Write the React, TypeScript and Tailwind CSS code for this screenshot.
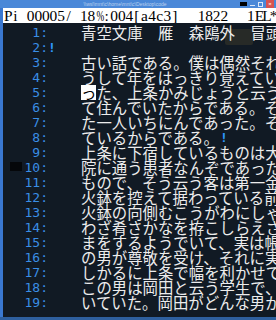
const ROWS = [
    '青空文庫　雁　森鴎外　冒頭',
    '',
    '古い話である。僕は偶然それ',
    'うして年をはっきり覚えてい',
    'った、上条かみじょうと云う',
    'て住んでいたからである。そ',
    'た一人いちにんであった。そ',
    'ているからである。',
    '上条に下宿しているものは大',
    '院に通う患者なんぞであった',
    'もので、そう云う客は第一金',
    '火鉢を控えて据わっている前',
    '火鉢の向側むこうがわにしゃ',
    'わざ肴さかなを拵こしらえさ',
    'まをするようでいて、実は帳',
    'の男が尊敬を受け、それに実',
    'しかるに上条で幅を利かせて',
    'この男は岡田と云う学生で、',
    'いていた。岡田がどんな男か',
];

// half-width cells so the serif status text sits on a fixed grid
function Cells({ text }: { text: string }) {
    return (
        <>
            {text.split('').map((c, i) => (
                <span
                    key={i}
                    className={c === '%' ? 'inline-block w-[7.6px] text-center scale-x-[0.6]' : 'inline-block w-[7.6px] text-center'}
                >
                    {c === ' ' ? '\u00a0' : c}
                </span>
            ))}
        </>
    );
}

export default function App() {
    return (
        <div className="w-[276px] h-[320px] overflow-hidden flex flex-col bg-[#111a24]">
            {/* Title bar */}
            <div className="h-[8px] shrink-0 bg-[#4a88d8] flex items-center">
                <span className="flex-1 text-center pl-[10px] text-[5px] leading-[8px] text-white/60 font-['Liberation_Sans',sans-serif] whitespace-nowrap">
                    \\wsl\mnt\c\home\mnt\c\Desktop\code
                </span>
                <div className="flex items-center h-full gap-[3px] pr-[2px]">
                    <div className="w-[7px] h-[4px] bg-black" />
                    <div className="w-[5px] h-[1px] bg-white/80 mt-[3px]" />
                    <div className="w-[5px] h-[5px] border border-white/80" />
                    <div className="w-[8px] h-[8px] bg-[#d9534f] flex items-center justify-center text-white text-[6px] leading-none">×</div>
                </div>
            </div>

            <div className="flex flex-1 min-h-0">
                {/* left window frame */}
                <div className="w-[3px] shrink-0 bg-[#3a78d0]" />

                <div className="flex-1 min-w-0 flex flex-col">
                    {/* Status bar */}
                    <div className="h-[15px] shrink-0 bg-white text-black text-[15.4px] leading-[15px] pl-[1px] whitespace-nowrap overflow-hidden flex font-['Liberation_Serif',serif]">
                        <span className="shrink-0"><Cells text="Pi 00005/ 18%:004[a4c3]" /></span>
                        <span className="shrink-0 ml-[19px]"><Cells text="1822" /></span>
                        <span className="shrink-0 ml-[19px]"><Cells text="1EL*" /></span>
                    </div>

                    {/* Text area, desktop faintly showing through */}
                    <div className="flex-1 pt-[2px] overflow-hidden relative">
                        <div className="absolute left-[222px] top-[6px] w-[28px] h-[16px] rounded-[2px] bg-[#6b5a2e]/25" />
                        <div className="absolute left-[7px] top-[139px] w-[12px] h-[9px] bg-black/70" />
                        <div className="relative">
                            {ROWS.map((row, i) => (
                                <div key={i} className="flex h-[15px] whitespace-nowrap">
                                    <span className="w-[45px] shrink-0 text-right text-[13px] leading-[15px] text-[#3a8ee6] font-['DejaVu_Sans_Mono',monospace]">
                                        {i + 1}:
                                    </span>
                                    <span className="w-[33px] shrink-0 text-[13px] leading-[15px] text-[#2f9bff] font-bold font-['DejaVu_Sans_Mono',monospace]">
                                        {i === 1 ? '!' : ''}
                                    </span>
                                    <span className="text-[15.4px] leading-[15px] text-[#ececec] font-['Noto_Sans_CJK_JP',sans-serif]">
                                        {i === 4 ? (
                                            <>
                                                <span className="inline-block bg-white text-black">{row[0]}</span>
                                                {row.slice(1)}
                                            </>
                                        ) : row}
                                    </span>
                                    {i === 7 && (
                                        <span className="w-[8px] shrink-0 ml-[1px] text-center text-[13px] leading-[15px] text-[#2f9bff] font-bold font-['DejaVu_Sans_Mono',monospace]">!</span>
                                    )}
                                </div>
                            ))}
                        </div>
                    </div>
                </div>
            </div>

            {/* bottom frame */}
            <div className="h-[3px] shrink-0 bg-[#2e5f9e]" />
        </div>
    );
}
